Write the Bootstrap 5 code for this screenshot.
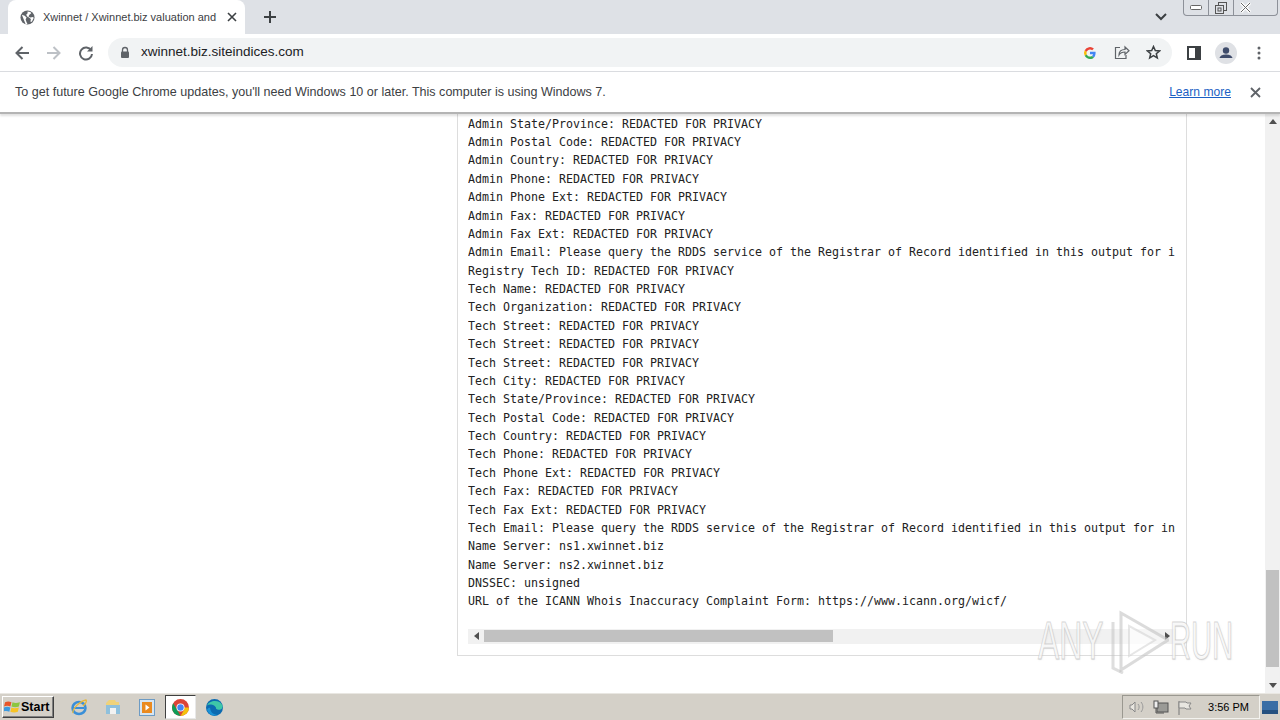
<!DOCTYPE html>
<html lang="en">
<head>
<meta charset="utf-8">
<title>Xwinnet</title>
<link href="https://cdn.jsdelivr.net/npm/bootstrap@5.3.0/dist/css/bootstrap.min.css" rel="stylesheet">
<style>
html,body{height:720px;overflow:hidden;background:#fff}
body{font-family:"Liberation Sans",sans-serif;color:#3c4043}
.shell{height:720px;position:relative}
.tabstrip{height:34px;background:#dee1e6;padding-left:8px}
.chrome-tab{width:237px;height:34px;background:#fff;border-radius:8px 8px 0 0;padding:0 8px 0 12px;font-size:11px;color:#3c4043}
.tab-title{width:172px;white-space:nowrap;margin-left:8px}
.tab-x{margin-left:12px}
.plus{margin-left:18px}
.chev{margin-left:auto;margin-right:16px;margin-top:13px}
.wctl{height:16px;width:95px;border:1px solid #8d9199;border-top:0;border-radius:0 0 4px 4px;margin-right:2px;background:#dee1e6}
.wctl>div{height:15px}
.w1{width:25px;border-right:1px solid #8d9199}
.w2{width:25px;border-right:1px solid #8d9199}
.w3{flex:1;padding-right:20px}
.toolbar{height:38px;background:#fff;border-bottom:1px solid #dadce0}
.nav-ico{width:32px;flex:none}
.omni{width:1064px;height:29px;background:#f1f3f4;border-radius:15px;margin-left:6px;padding:0 11px 0 11px}
.omni-url{font-size:13.5px;color:#202124;margin-left:10px}
.infobar{height:42px;background:#fff;border-bottom:2px solid #b4b4b4;padding:0 15px;font-size:12.56px;color:#3c4043;box-shadow:0 2px 2px rgba(0,0,0,.12);position:relative;z-index:2}
.learn{color:#1a5fc4;text-decoration:underline;font-size:12.1px}
.viewport{height:579px;background:#fff}
.page-col{flex:1;min-width:0}
.whois-panel{margin-left:457px;width:730px;height:542px;border:1px solid #ddd;border-top:0;padding:.7px 10px 0;background:#fff}
.whois-text{margin:0;height:514.3px;overflow:hidden;white-space:pre;font-family:"DejaVu Sans Mono","Liberation Mono",monospace;font-size:11.63px;line-height:18.38px;color:#222}
.hbar{height:15px;background:#f1f1f1}
.hthumb{width:349px;height:12px;background:#c1c1c1;margin-left:15px}
.arrow-l{width:0;height:0;border:4px solid transparent;border-right:5px solid #505050;border-left:0;margin-left:6px;margin-right:-10px;flex:none}
.arrow-r{width:0;height:0;border:4px solid transparent;border-left:5px solid #505050;border-right:0;margin-left:auto;margin-right:6px;flex:none}
.vbar{width:15px;background:#f1f1f1;flex:none}
.vtrack{flex:1;padding-top:441px}
.vthumb{height:97px;background:#c1c1c1;margin:0 1px}
.vcap{height:15px}
.tri-u{width:0;height:0;border:4.5px solid transparent;border-bottom:5px solid #505050;border-top:0}
.tri-d{width:0;height:0;border:4.5px solid transparent;border-top:5px solid #505050;border-bottom:0}
.taskbar{height:27px;background:#d4d0c8;border-top:1px solid #e9e7e2}
.start-btn{width:52px;height:22px;margin-left:2px;background:#d4d0c8;border:1px solid;border-color:#fff #404040 #404040 #fff;font-weight:700;font-size:12.5px;color:#000;padding:0 0 0 1px;gap:0;box-shadow:inset -1px -1px 0 #808080}
.tb-ico{width:34px;height:24px;flex:none}
.tb-active{background:#fff;border:1px solid;border-color:#404040 #e8e8e8 #e8e8e8 #404040;width:31px;margin:0 1px}
.tray{height:24px;width:138px;border:1px solid;border-color:#9a9890 #f3f2ee #f3f2ee #9a9890;margin-left:auto;font-size:11px;color:#000}
.clock{margin-left:auto;margin-right:10px}
.deskico{width:20px}
.mark-over{position:absolute;left:1036px;top:606px;width:200px;height:66px;pointer-events:none;z-index:3}
.mark-word{position:absolute;top:7px;font-size:53px;line-height:56px;color:rgba(255,255,255,.7);-webkit-text-stroke:1px rgba(190,190,190,.65);text-shadow:1px 1px 2px rgba(190,190,190,.4);transform-origin:left top;white-space:nowrap}
.mw1{left:2px;transform:scaleX(.6)}
.mw2{left:134px;transform:scaleX(.55)}
.mark-tri{position:absolute;left:67px;top:2px}
</style>
</head>
<body>
<div class="shell d-flex flex-column">
  <div class="tabstrip d-flex align-items-start">
    <div class="chrome-tab d-flex align-items-center">
      <svg width="15" height="15" viewBox="0 0 16 16"><circle cx="8" cy="8" r="7.5" fill="#5f6368"/><path d="M2 5l3 1 2 2-1 2 1 3 1 2-2 .2-2-5zM8 1.5l3 .5 1 1.5-2 1.5-1 2 2 1 3-.5 .6 1-2 4-1.5 0 .5-3-2-1.5-2-1-1-2 1.500-1.500z" fill="#fff"/></svg>
      <div class="tab-title">Xwinnet / Xwinnet.biz valuation and</div>
      <svg class="tab-x" width="10" height="10" viewBox="0 0 10 10"><path d="M1 1l8 8M9 1l-8 8" stroke="#3c4043" stroke-width="1.600"/></svg>
    </div>
    <svg class="plus mt-2" width="14" height="18" viewBox="0 0 14 18"><path d="M7 3v12M1 9h12" stroke="#3c4043" stroke-width="2"/></svg>
    <svg class="chev" width="12" height="8" viewBox="0 0 12 8"><path d="M1 1l5 5 5-5" fill="none" stroke="#3c4043" stroke-width="2"/></svg>
    <div class="wctl d-flex">
      <div class="w1 d-flex align-items-center justify-content-center"><svg width="12" height="6" viewBox="0 0 12 6"><rect x=".5" y=".5" width="11" height="4" rx="1" fill="#fff" stroke="#666"/></svg></div>
      <div class="w2 d-flex align-items-center justify-content-center"><svg width="12" height="12" viewBox="0 0 12 12"><rect x="3.500" y=".5" width="8" height="8" fill="none" stroke="#555"/><rect x=".5" y="3.500" width="8" height="8" fill="#dee1e6" stroke="#555"/><rect x="3" y="6" width="3" height="3" fill="none" stroke="#555"/></svg></div>
      <div class="w3 d-flex align-items-center justify-content-center"><svg width="13" height="11" viewBox="0 0 13 11"><path d="M2 1l9 9M11 1l-9 9" stroke="#fff" stroke-width="3"/><path d="M2 1l9 9M11 1l-9 9" stroke="#666" stroke-width="1" fill="none"/></svg></div>
    </div>
  </div>

  <div class="toolbar d-flex align-items-center">
    <div class="d-flex align-items-center" style="margin-left:6px">
      <div class="nav-ico d-flex justify-content-center"><svg width="16" height="16" viewBox="0 0 16 16"><path d="M15 8H3M8.500 2L2.500 8l6 6" fill="none" stroke="#5f6368" stroke-width="2"/></svg></div>
      <div class="nav-ico d-flex justify-content-center"><svg width="16" height="16" viewBox="0 0 16 16"><path d="M1 8h12M7.500 2l6 6-6 6" fill="none" stroke="#bdc1c6" stroke-width="2"/></svg></div>
      <div class="nav-ico d-flex justify-content-center"><svg width="16" height="16" viewBox="0 0 16 16"><path d="M13.200 5.500A6 6 0 1 0 14 9" fill="none" stroke="#5f6368" stroke-width="2"/><path d="M14.500 1v5.500H9z" fill="#5f6368"/></svg></div>
    </div>
    <div class="omni d-flex align-items-center" >
      <svg width="12" height="13" viewBox="0 0 12 13"><path d="M3.500 6V4a2.500 2.500 0 0 1 5 0v2" fill="none" stroke="#5f6368" stroke-width="1.300"/><rect x="2" y="5.500" width="8" height="6.500" rx="1" fill="#5f6368"/></svg>
      <div class="omni-url">xwinnet.biz.siteindices.com</div>
      <svg class="ms-auto" width="14" height="14" viewBox="0 0 14 14"><path d="M12.600 7c0-.5 0-.9-.1-1.300H7v2.500h3.100c-.2.800-.6 1.400-1.200 1.800l2 1.500c1.100-1 1.700-2.600 1.700-4.500z" fill="#4285f4"/><path d="M7 13c1.600 0 3-.5 3.900-1.500l-2-1.500c-.5.400-1.200.6-1.900.6-1.500 0-2.800-1-3.300-2.400l-2 1.600C2.700 11.800 4.700 13 7 13z" fill="#34a853"/><path d="M3.700 8.200a3.600 3.600 0 0 1 0-2.400l-2-1.600a6 6 0 0 0 0 5.600z" fill="#fbbc05"/><path d="M7 3.400c.9 0 1.600.3 2.200.9l1.700-1.700A6 6 0 0 0 1.700 4.200l2 1.600C4.200 4.400 5.500 3.400 7 3.400z" fill="#ea4335"/></svg>
      <svg style="margin-left:17px" width="16" height="15" viewBox="0 0 16 15"><path d="M6 2.500H1.500v11H12V10" fill="none" stroke="#5f6368" stroke-width="1.200"/><path d="M5 10c0-4 3-5.500 6-5.500V2l4 3.800-4 3.700V7C8.500 7 6.500 7.500 5 10z" fill="none" stroke="#5f6368" stroke-width="1.200"/></svg>
      <svg style="margin-left:16px" width="15" height="15" viewBox="0 0 15 15"><path d="M7.500 1.500l1.800 4 4.300.4-3.300 2.800 1 4.200-3.800-2.300-3.800 2.300 1-4.200L1.400 5.900l4.300-.4z" fill="none" stroke="#3c4043" stroke-width="1.500"/></svg>
    </div>
    <svg style="margin-left:15px" width="14" height="14" viewBox="0 0 14 14"><rect x="1" y="1" width="12" height="12" fill="none" stroke="#3c4043" stroke-width="2"/><rect x="8" y="1" width="5" height="12" fill="#3c4043"/></svg>
    <svg style="margin-left:14px" width="22" height="22" viewBox="0 0 22 22"><circle cx="11" cy="11" r="11" fill="#dfe1e5"/><circle cx="11" cy="8.500" r="3.200" fill="#3f4c6b"/><path d="M4.500 16c1-3 4-3.500 6.500-3.500s5.500.5 6.500 3.500z" fill="#3f4c6b"/></svg>
    <svg style="margin-left:20px" width="4" height="14" viewBox="0 0 4 14"><circle cx="2" cy="2" r="1.500" fill="#5f6368"/><circle cx="2" cy="7" r="1.500" fill="#5f6368"/><circle cx="2" cy="12" r="1.500" fill="#5f6368"/></svg>
  </div>

  <div class="infobar d-flex align-items-center">
    <div>To get future Google Chrome updates, you'll need Windows 10 or later. This computer is using Windows 7.</div>
    <a class="learn ms-auto" href="#">Learn more</a>
    <svg style="margin-left:19px;margin-right:4px" width="11" height="11" viewBox="0 0 11 11"><path d="M1 1l9 9M10 1l-9 9" stroke="#5f6368" stroke-width="1.800"/></svg>
  </div>

  <div class="viewport d-flex">
    <div class="page-col">
      <div class="whois-panel">
<pre class="whois-text">Admin State/Province: REDACTED FOR PRIVACY
Admin Postal Code: REDACTED FOR PRIVACY
Admin Country: REDACTED FOR PRIVACY
Admin Phone: REDACTED FOR PRIVACY
Admin Phone Ext: REDACTED FOR PRIVACY
Admin Fax: REDACTED FOR PRIVACY
Admin Fax Ext: REDACTED FOR PRIVACY
Admin Email: Please query the RDDS service of the Registrar of Record identified in this output for i
Registry Tech ID: REDACTED FOR PRIVACY
Tech Name: REDACTED FOR PRIVACY
Tech Organization: REDACTED FOR PRIVACY
Tech Street: REDACTED FOR PRIVACY
Tech Street: REDACTED FOR PRIVACY
Tech Street: REDACTED FOR PRIVACY
Tech City: REDACTED FOR PRIVACY
Tech State/Province: REDACTED FOR PRIVACY
Tech Postal Code: REDACTED FOR PRIVACY
Tech Country: REDACTED FOR PRIVACY
Tech Phone: REDACTED FOR PRIVACY
Tech Phone Ext: REDACTED FOR PRIVACY
Tech Fax: REDACTED FOR PRIVACY
Tech Fax Ext: REDACTED FOR PRIVACY
Tech Email: Please query the RDDS service of the Registrar of Record identified in this output for in
Name Server: ns1.xwinnet.biz
Name Server: ns2.xwinnet.biz
DNSSEC: unsigned
URL of the ICANN Whois Inaccuracy Complaint Form: https://www.icann.org/wicf/</pre>
        <div class="hbar d-flex align-items-center">
          <div class="arrow-l"></div>
          <div class="hthumb"></div>
          <div class="arrow-r"></div>
        </div>
      </div>
    </div>
    <div class="vbar d-flex flex-column">
      <div class="vcap d-flex align-items-center justify-content-center"><div class="tri-u"></div></div>
      <div class="vtrack"><div class="vthumb"></div></div>
      <div class="vcap d-flex align-items-center justify-content-center"><div class="tri-d"></div></div>
    </div>
  </div>

  <div class="taskbar d-flex align-items-center">
    <div class="start-btn d-flex align-items-center">
      <svg width="17" height="16" viewBox="0 0 16 15"><path d="M1 3c2-1 4-1 6 0L6 7C4 6 2 6 0 7z" fill="#e8562a"/><path d="M8 3c2 1 4 1 7 0l-1 4c-2 1-5 1-7 0z" fill="#8cc63f"/><path d="M0 8c2-1 4-1 6 0l-1 4c-2-1-4-1-6 0z" fill="#3c9ae0"/><path d="M7 8c2 1 4 1 7 0l-1 4c-2 1-5 1-7 0z" fill="#f7c325"/></svg>
      <span>Start</span>
    </div>
    <div class="d-flex align-items-center" style="margin-left:8px">
      <div class="tb-ico d-flex align-items-center justify-content-center"><svg width="18" height="18" viewBox="0 0 18 18"><ellipse cx="9" cy="10" rx="6.500" ry="6" fill="none" stroke="#3a8fd8" stroke-width="2.500"/><path d="M3 10h11" stroke="#3a8fd8" stroke-width="2"/><path d="M3 15C2 11 10 3 16 2c1 1-1 4-3 6" fill="none" stroke="#e8b83a" stroke-width="1.300"/></svg></div>
      <div class="tb-ico d-flex align-items-center justify-content-center"><svg width="16" height="16" viewBox="0 0 16 16"><path d="M1 4l3-3h6l1 2h3v3H1z" fill="#efd27a"/><rect x="1" y="6" width="14" height="9" fill="#8fc0dc"/><rect x="5" y="9" width="6" height="6" fill="#f2f2f2"/></svg></div>
      <div class="tb-ico d-flex align-items-center justify-content-center"><svg width="16" height="17" viewBox="0 0 16 17"><rect x=".5" y=".5" width="15" height="16" fill="#d6e5f2" stroke="#6d9bc4"/><rect x="3" y="3" width="10" height="11" fill="#ea8a1f"/><path d="M6.500 5.500l4 3-4 3z" fill="#fff"/></svg></div>
      <div class="tb-ico tb-active d-flex align-items-center justify-content-center"><svg width="17" height="17" viewBox="0 0 16 16"><circle cx="8" cy="8" r="8" fill="#db4437"/><path d="M8 16a8 8 0 0 1-6.900-12L5 10.500z" fill="#0f9d58"/><path d="M16 8a8 8 0 0 1-8 8l3.500-6-.5-2z" fill="#f4c20d"/><circle cx="8" cy="8" r="3.800" fill="#fff"/><circle cx="8" cy="8" r="3" fill="#4285f4"/></svg></div>
      <div class="tb-ico d-flex align-items-center justify-content-center"><svg width="17" height="17" viewBox="0 0 16 16"><circle cx="8" cy="8" r="8" fill="#0c6ab0"/><path d="M1 6C3 1 13 0 15.500 6c.5 2-.5 4-3.500 4-2 0-3-1-2.500-1.500C9 6 4 4 1 6z" fill="#3fc7a8"/><path d="M4 9c0 3 3 6 7 6-4 2-9-1-10-5 1-2 3-2 3-1z" fill="#1a92d6"/></svg></div>
    </div>
    <div class="tray d-flex align-items-center">
      <svg style="margin-left:6px" width="16" height="14" viewBox="0 0 16 14"><path d="M1 5h2l3-3v10L3 9H1z" fill="#e8e6e0" stroke="#888"/><path d="M9 4c1.500 2 1.500 4 0 6M12 2c2.500 3 2.500 7 0 10" fill="none" stroke="#999"/></svg>
      <svg style="margin-left:8px" width="16" height="15" viewBox="0 0 16 15"><rect x="4" y="3" width="11" height="9" fill="#9a9a96" stroke="#555"/><rect x="1" y="1" width="4" height="7" fill="#eee" stroke="#555"/><path d="M3 8v5h8" fill="none" stroke="#555"/></svg>
      <svg style="margin-left:8px" width="15" height="15" viewBox="0 0 15 15"><path d="M2 1v14" stroke="#777"/><path d="M2 2h7l1 1h4l-2 3 2 3H9L8 8H2z" fill="#e8e6e0" stroke="#888"/></svg>
      <span class="clock">3:56 PM</span>
    </div>
    <div class="deskico d-flex align-items-center justify-content-center"><svg width="16" height="13" viewBox="0 0 16 13"><rect width="16" height="13" fill="#3a6ea5"/><rect y="9" width="16" height="4" fill="#24507f"/></svg></div>
  </div>

  <div class="mark-over">
    <span class="mark-word mw1">ANY</span>
    <svg class="mark-tri" width="66" height="66" viewBox="0 0 66 66"><path d="M10 14v46l10 5" fill="none" stroke="rgba(195,195,195,.55)" stroke-width="3"/><path d="M18 5L65 32 18 62z" fill="rgba(255,255,255,.4)" stroke="rgba(195,195,195,.6)" stroke-width="3"/><path d="M26 18L52 32 26 48z" fill="rgba(255,255,255,.55)" stroke="rgba(205,205,205,.5)" stroke-width="2"/></svg>
    <span class="mark-word mw2">RUN</span>
  </div>
</div>
</body>
</html>
